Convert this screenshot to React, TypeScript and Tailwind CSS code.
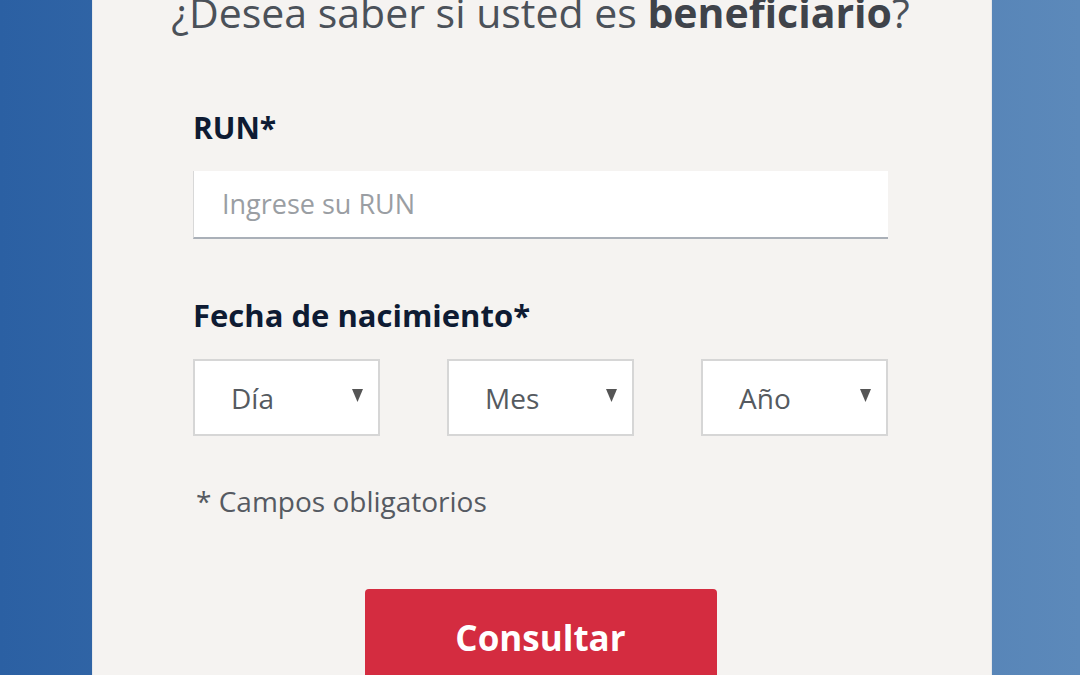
import React from "react";

function Select({ label }: { label: string }) {
  return (
    <div className="box-border flex h-[77px] w-[187px] items-center justify-between border-2 border-[#d6d6d6] bg-white pl-[36px] pr-[15px]">
      <span className="text-[28px] leading-[32px] text-[#555a60]">{label}</span>
      <svg width="11" height="13" viewBox="0 0 11 13" className="mb-[4px]">
        <path d="M0 0 L11 0 L5.5 13 Z" fill="#555" />
      </svg>
    </div>
  );
}

export default function App() {
  return (
    <div
      className="flex h-[675px] w-[1080px] overflow-hidden bg-gradient-to-r from-[#2b60a3] to-[#5c89ba]"
      style={{ fontFamily: "'Open Sans', Lato, sans-serif" }}
    >
      <div className="ml-[92px] flex h-full w-[900px] shrink-0 flex-col border-x border-[#e6e8ea] bg-[#f5f3f1] pl-[100px] pr-[103px]">
        <h1 className="-mx-[60px] mt-[-13px] shrink-0 whitespace-nowrap text-center text-[41px] leading-[50px] text-[#4b5159]">
          ¿Desea saber si usted es <b className="font-bold text-[#3f434a]">beneficiario</b>?
        </h1>
        <label className="mt-[74px] shrink-0 text-[30px] font-bold leading-[34px] text-[#0e1b33]">RUN*</label>
        <div className="mt-[26px] flex h-[68px] shrink-0 items-center border-b-2 border-l border-b-[#aab0b8] border-l-[#d8d8d8] bg-white pl-[28px]">
          <span className="text-[27px] text-[#9a9ea3]">Ingrese su RUN</span>
        </div>
        <label className="mt-[59px] shrink-0 text-[31px] font-bold leading-[34px] text-[#0e1b33]">Fecha de nacimiento*</label>
        <div className="mt-[27px] flex shrink-0 justify-between">
          <Select label="Día" />
          <Select label="Mes" />
          <Select label="Año" />
        </div>
        <p className="mt-[48px] shrink-0 pl-[3px] text-[28px] leading-[34px] text-[#555a62]">* Campos obligatorios</p>
        <div className="mt-[71px] flex shrink-0 justify-center">
          <button className="flex h-[100px] w-[352px] items-start justify-center rounded-[4px] bg-[#d42c40] pt-[28px] text-[35px] font-bold leading-[42px] text-white">
            Consultar
          </button>
        </div>
      </div>
    </div>
  );
}
